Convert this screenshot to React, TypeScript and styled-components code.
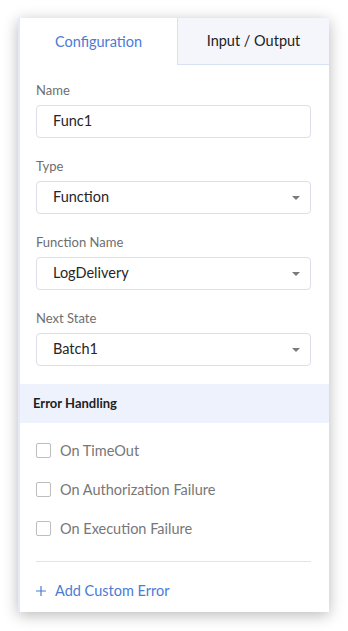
import styled, { createGlobalStyle } from "styled-components";

const GlobalStyle = createGlobalStyle`
  body {
    margin: 0;
    background: #ffffff;
    font-family: "Lato", "Liberation Sans", sans-serif;
  }
`;

const Page = styled.div`
  padding: 18px 19px 19px 18px;
`;

const Panel = styled.div`
  width: 311px;
  height: 594px;
  box-sizing: border-box;
  display: flex;
  flex-direction: column;
  background: #ffffff;
  border-left: 2px solid #e3e9f8;
  box-shadow: 0 3px 14px rgba(0, 0, 0, 0.28);
`;

const Tabs = styled.div`
  display: flex;
  height: 47px;
`;

const Tab = styled.div<{ $active?: boolean }>`
  flex: ${({ $active }) => ($active ? "0 0 157px" : "1")};
  display: flex;
  align-items: center;
  justify-content: center;
  padding-bottom: 1px;
  font-size: 14.5px;
  color: ${({ $active }) => ($active ? "#4a7bd6" : "#222222")};
  background: ${({ $active }) => ($active ? "#ffffff" : "#f4f6fb")};
  border-left: ${({ $active }) => ($active ? "none" : "1px solid #d8e1f4")};
  border-bottom: ${({ $active }) => ($active ? "none" : "1px solid #d8e1f4")};
  box-sizing: border-box;
`;

const Form = styled.div`
  display: flex;
  flex-direction: column;
  gap: 20px;
  padding: 17px 18px 0 16px;
`;

const Field = styled.div`
  display: flex;
  flex-direction: column;
  gap: 7px;
`;

const Label = styled.div`
  font-size: 13px;
  line-height: 16px;
  color: #6e6e6e;
`;

const Box = styled.div`
  height: 33px;
  box-sizing: border-box;
  display: flex;
  align-items: center;
  padding: 0 16px 2px;
  border: 1px solid #dcdfe9;
  border-radius: 4px;
  font-size: 14.5px;
  color: #262626;
`;

const Caret = styled.span`
  margin: 2px -6px 0 auto;
  width: 0;
  height: 0;
  border-left: 4px solid transparent;
  border-right: 4px solid transparent;
  border-top: 4px solid #7a7a7a;
`;

const SectionHeader = styled.div`
  margin-top: 18px;
  height: 39px;
  display: flex;
  align-items: center;
  padding: 0 0 1px 13px;
  box-sizing: border-box;
  background: #eef2fd;
  font-size: 13px;
  font-weight: 700;
  color: #1e1e1e;
`;

const Options = styled.div`
  display: flex;
  flex-direction: column;
  padding: 8px 18px 0 16px;
`;

const Option = styled.label`
  height: 39px;
  display: flex;
  align-items: center;
  gap: 9px;
  font-size: 14.5px;
  color: #777777;
`;

const Check = styled.span`
  width: 15px;
  height: 15px;
  box-sizing: border-box;
  border: 1px solid #bdbdbd;
  border-radius: 2px;
  background: #ffffff;
`;

const Divider = styled.div`
  margin: 13px 18px 0 16px;
  height: 1px;
  background: #e4e4e4;
`;

const AddLink = styled.div`
  margin: 20px 0 0 16px;
  display: flex;
  align-items: center;
  gap: 9px;
  font-size: 14.5px;
  color: #4a7bd6;
`;

const fields = [
  { label: "Name", value: "Func1", select: false },
  { label: "Type", value: "Function", select: true },
  { label: "Function Name", value: "LogDelivery", select: true },
  { label: "Next State", value: "Batch1", select: true },
];

const errors = ["On TimeOut", "On Authorization Failure", "On Execution Failure"];

const App = () => {
  return (
    <Page>
      <GlobalStyle />
      <Panel>
        <Tabs>
          <Tab $active>Configuration</Tab>
          <Tab>Input / Output</Tab>
        </Tabs>
        <Form>
          {fields.map((f) => (
            <Field key={f.label}>
              <Label>{f.label}</Label>
              <Box>
                {f.value}
                {f.select && <Caret />}
              </Box>
            </Field>
          ))}
        </Form>
        <SectionHeader>Error Handling</SectionHeader>
        <Options>
          {errors.map((e) => (
            <Option key={e}>
              <Check />
              {e}
            </Option>
          ))}
        </Options>
        <Divider />
        <AddLink>
          <svg width="10" height="10" viewBox="0 0 10 10">
            <path d="M5 0v10M0 5h10" stroke="#4a7bd6" strokeWidth="1.2" />
          </svg>
          Add Custom Error
        </AddLink>
      </Panel>
    </Page>
  );
};

export default App;
